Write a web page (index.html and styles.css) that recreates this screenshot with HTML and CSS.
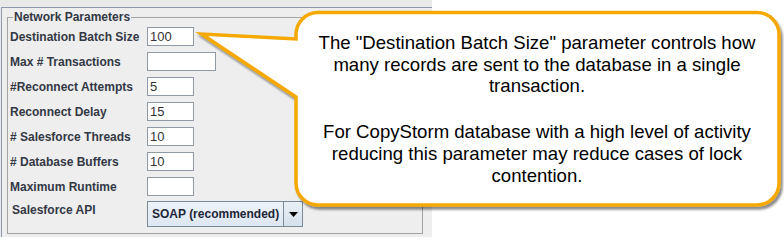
FILE: index.html
```html
<!DOCTYPE html>
<html>
<head>
<meta charset="utf-8">
<link rel="stylesheet" href="styles.css">
</head>
<body>
<div class="screen">
  <div class="panel">
    <div class="tabbody">
      <fieldset class="group">
        <legend class="group-title">Network Parameters</legend>
        <div class="row"><label class="lbl">Destination Batch Size</label><input class="field w-short" type="text" value="100" readonly></div>
        <div class="row"><label class="lbl">Max # Transactions</label><input class="field w-long" type="text" value="" readonly></div>
        <div class="row"><label class="lbl">#Reconnect Attempts</label><input class="field w-short" type="text" value="5" readonly></div>
        <div class="row"><label class="lbl">Reconnect Delay</label><input class="field w-short" type="text" value="15" readonly></div>
        <div class="row"><label class="lbl"># Salesforce Threads</label><input class="field w-short" type="text" value="10" readonly></div>
        <div class="row"><label class="lbl"># Database Buffers</label><input class="field w-short" type="text" value="10" readonly></div>
        <div class="row"><label class="lbl">Maximum Runtime</label><input class="field w-short" type="text" value="" readonly></div>
        <div class="row row-api"><label class="lbl lbl-api">Salesforce API</label>
          <div class="combo">
            <span class="combo-text">SOAP (recommended)</span>
            <span class="combo-btn"><svg width="9" height="5" viewBox="0 0 9 5"><path d="M0 0 H9 L4.5 5 Z" fill="#000"/></svg></span>
          </div>
        </div>
      </fieldset>
    </div>
  </div>
  <div class="callout">
    <svg class="callout-shape" width="784" height="237" viewBox="0 0 784 237">
      <defs>
        <filter id="sh" x="-10%" y="-10%" width="125%" height="130%">
          <feDropShadow dx="2" dy="3" stdDeviation="1.3" flood-color="#000" flood-opacity="0.45"/>
        </filter>
      </defs>
      <path d="M318 12.5 H757 A22 22 0 0 1 779 34.5 V183 A22 22 0 0 1 757 205 H318 A22 22 0 0 1 296 183 V97 L201.5 34 L296 39 V34.5 A22 22 0 0 1 318 12.5 Z" fill="#fff" stroke="#f5a800" stroke-width="3.5" stroke-linejoin="miter" filter="url(#sh)"/>
    </svg>
    <div class="callout-text">
      <p class="para">The "Destination Batch Size" parameter controls how<br>many records are sent to the database in a single<br>transaction.</p>
      <p class="para para-2">For CopyStorm database with a high level of activity<br>reducing this parameter may reduce cases of lock<br>contention.</p>
    </div>
  </div>
</div>
</body>
</html>
```

FILE: styles.css
```css
html, body {
  margin: 0;
  padding: 0;
}
body {
  background: #ffffff;
  width: 784px;
  height: 237px;
  overflow: hidden;
  font-family: "Liberation Sans", Arial, sans-serif;
}
.screen {
  position: relative;
  width: 784px;
  height: 237px;
  display: flex;
}
.panel {
  width: 432px;
  height: 237px;
  box-sizing: border-box;
  background: #e9e9e9;
  padding: 7px 0 0 1px;
}
.tabbody {
  height: 230px;
  background: #eeeeee;
  border-top: 1px solid #8c9aab;
  border-left: 1px solid #8c9aab;
  padding: 2px 0 0 5px;
}
.group {
  margin: 0;
  width: 416px;
  box-sizing: border-box;
  border: 1px solid #a3a3a3;
  padding: 0 0 6px 2px;
  min-width: 0;
}
.group-title {
  font-size: 12px;
  font-weight: bold;
  line-height: 14px;
  color: #333844;
  padding: 0 1px;
  margin-left: 3px;
}
.row {
  display: flex;
  align-items: center;
  height: 25px;
}
.lbl {
  width: 137px;
  flex: none;
  font-size: 12px;
  font-weight: bold;
  line-height: 14px;
  color: #333844;
}
.field {
  box-sizing: border-box;
  height: 19px;
  margin: 0;
  padding: 0 0 0 2px;
  border: 1px solid #8f9aa6;
  background: #ffffff;
  font-family: "Liberation Sans", Arial, sans-serif;
  font-size: 13px;
  color: #333333;
  outline: none;
}
.w-short { width: 47px; }
.w-long { width: 69px; }
.row-api {
  align-items: flex-start;
  height: auto;
  margin-top: 2px;
}
.lbl-api {
  padding: 2px 0 0 2px;
  width: 135px;
}
.combo {
  display: flex;
  width: 156px;
  height: 26px;
  box-sizing: border-box;
  border: 1px solid #7a8a99;
  background: linear-gradient(#eef3f9, #dde7f1);
}
.combo-text {
  flex: 1;
  display: flex;
  align-items: center;
  padding-left: 4px;
  font-size: 12px;
  font-weight: bold;
  color: #1e2638;
  white-space: nowrap;
}
.combo-btn {
  width: 18px;
  border-left: 1px solid #7a8a99;
  display: flex;
  align-items: center;
  justify-content: center;
  background: linear-gradient(#e9f0f7, #d4e0ec);
}
.combo-btn svg {
  display: block;
  margin-top: 1px;
}
.callout {
  position: absolute;
  left: 0;
  top: 0;
  width: 784px;
  height: 237px;
  pointer-events: none;
}
.callout-shape {
  position: absolute;
  left: 0;
  top: 0;
}
.callout-text {
  position: absolute;
  left: 287px;
  top: 32px;
  width: 500px;
  text-align: center;
  font-family: "Liberation Sans", Arial, sans-serif;
  font-size: 18.6px;
  line-height: 21.7px;
  color: #000000;
}
.para {
  margin: 0;
}
.para-2 {
  margin-top: 24px;
}
```
